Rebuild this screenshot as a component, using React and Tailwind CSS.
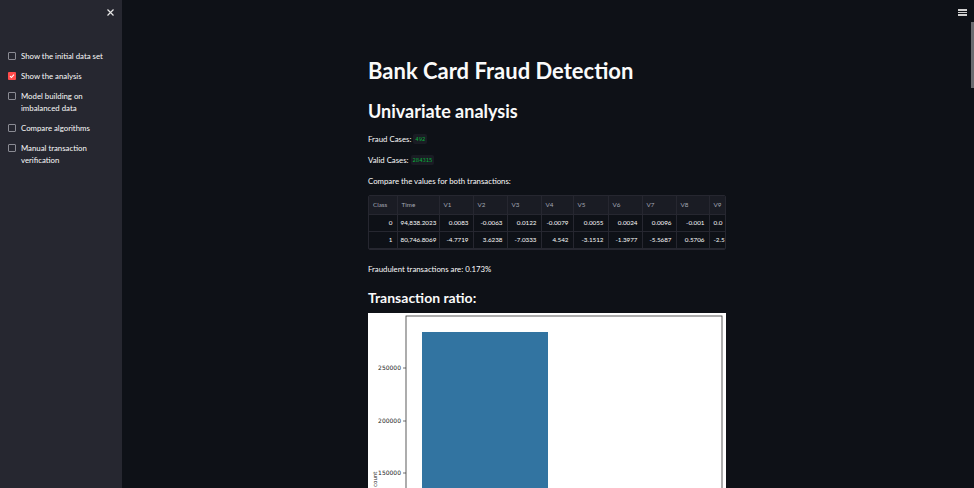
import React from "react";

const font = { fontFamily: 'Lato, "Noto Sans", "Liberation Sans", sans-serif' };

function Check({ checked }) {
  return checked ? (
    <div className="w-[8px] h-[8px] mt-[2px] shrink-0 rounded-[1px] bg-[#ff4b4b] flex items-center justify-center">
      <svg width="6" height="6" viewBox="0 0 6 6"><path d="M1 3.2 L2.4 4.5 L5 1.6" stroke="white" strokeWidth="1.1" fill="none" /></svg>
    </div>
  ) : (
    <div className="w-[8px] h-[8px] mt-[2px] shrink-0 rounded-[1px] border border-[#8a8b93]" />
  );
}

const items = [
  { label: ["Show the initial data set"], c: false },
  { label: ["Show the analysis"], c: true },
  { label: ["Model building on", "imbalanced data"], c: false },
  { label: ["Compare algorithms"], c: false },
  { label: ["Manual transaction", "verification"], c: false },
];

const cols = [
  ["Class", 28], ["Time", 42], ["V1", 34], ["V2", 34], ["V3", 34], ["V4", 32], ["V5", 35], ["V6", 34], ["V7", 34], ["V8", 33], ["V9", 30],
];
const rows = [
  ["0", "94,838.2023", "0.0083", "-0.0063", "0.0122", "-0.0079", "0.0055", "0.0024", "0.0096", "-0.001", "0.0"],
  ["1", "80,746.8069", "-4.7719", "3.6238", "-7.0333", "4.542", "-3.1512", "-1.3977", "-5.5687", "0.5706", "-2.5"],
];

export default function App() {
  return (
    <div className="w-[974px] h-[488px] overflow-hidden flex bg-[#0e1117] text-[#fafafa] relative" style={font}>
      <div className="w-[122px] shrink-0 h-full bg-[#262730] relative">
        <svg className="absolute left-[107px] top-[9px]" width="7" height="7" viewBox="0 0 7 7"><path d="M0.5 0.5 L6.5 6.5 M6.5 0.5 L0.5 6.5" stroke="#e6e6e6" strokeWidth="1.2" /></svg>
        <div className="pt-[50px] pl-[8px] flex flex-col gap-[8px]">
          {items.map((it, i) => (
            <div key={i} className="flex gap-[5px] items-start">
              <Check checked={it.c} />
              <div className="text-[7.8px] leading-[12px] text-[#fafafa]">
                {it.label.map((l, j) => <div key={j}>{l}</div>)}
              </div>
            </div>
          ))}
        </div>
      </div>
      <div className="flex-1 h-full relative">
        <div className="absolute right-[7px] top-[9px] flex flex-col gap-[1px]">
          <div className="w-[9px] h-[1.5px] bg-[#d0d0d0]" />
          <div className="w-[9px] h-[1.5px] bg-[#d0d0d0]" />
          <div className="w-[9px] h-[1.5px] bg-[#d0d0d0]" />
        </div>
        <div className="absolute right-0 top-[22px] w-[3px] h-[66px] bg-[#6a6b70]" />
        <div className="ml-[246px] w-[358px] pt-[57px]">
          <h1 className="text-[22px] font-bold leading-[28px] text-[#fafafa] whitespace-nowrap">Bank Card Fraud Detection</h1>
          <h2 className="mt-[14px] text-[18px] font-bold leading-[24px] whitespace-nowrap">Univariate analysis</h2>
          <div className="mt-[10px] text-[7.8px] leading-[12px] flex items-center gap-[2px]">
            <span>Fraud Cases:</span>
            <span className="bg-[#1a1c24] text-[#09ab3b] px-[2px] rounded-[2px] text-[5.5px] leading-[10px]" style={{ fontFamily: '"DejaVu Sans Mono", monospace' }}>492</span>
          </div>
          <div className="mt-[9px] text-[7.8px] leading-[12px] flex items-center gap-[2px]">
            <span>Valid Cases:</span>
            <span className="bg-[#1a1c24] text-[#09ab3b] px-[2px] rounded-[2px] text-[5.5px] leading-[10px]" style={{ fontFamily: '"DejaVu Sans Mono", monospace' }}>284315</span>
          </div>
          <div className="mt-[9px] text-[7.8px] leading-[12px]">Compare the values for both transactions:</div>
          <div className="mt-[8px] w-[358px] overflow-hidden border border-[#262730] rounded-[2px]">
            <table className="border-collapse text-[6.3px] table-fixed" style={{ width: 370 }}>
              <colgroup>
                {cols.map(([c, w]) => <col key={c} style={{ width: w }} />)}
              </colgroup>
              <thead>
                <tr className="h-[18px] bg-[#1a1c24]">
                  {cols.map(([c]) => (
                    <th key={c} className="font-normal text-left pl-[4px] text-[#a3a8b4] border-r border-b border-[#262730]">{c}</th>
                  ))}
                </tr>
              </thead>
              <tbody>
                {rows.map((r, i) => (
                  <tr key={i} className="h-[17px]">
                    {r.map((v, j) => (
                      <td key={j} className={`${j === 1 ? "text-left pl-[3px]" : j === 10 ? "text-left pl-[4px]" : "text-right pr-[4px]"} text-[#fafafa] border-r border-b border-[#262730] whitespace-nowrap overflow-hidden`}>{v}</td>
                    ))}
                  </tr>
                ))}
              </tbody>
            </table>
          </div>
          <div className="mt-[13px] text-[7.8px] leading-[12px]">Fraudulent transactions are: 0.173%</div>
          <h3 className="mt-[13px] text-[14px] font-bold leading-[20px] whitespace-nowrap">Transaction ratio:</h3>
          <div className="mt-[5px] w-[358px] h-[200px] bg-white relative">
            <svg width="358" height="200" viewBox="0 0 358 200">
              <rect x="38" y="3" width="316" height="200" fill="none" stroke="#333" strokeWidth="0.8" />
              <rect x="54" y="19" width="126" height="190" fill="#3274a1" />
              {[[55, "250000"], [108, "200000"], [160, "150000"]].map(([y, t]) => (
                <g key={t}>
                  <line x1="35" y1={y} x2="38" y2={y} stroke="#333" strokeWidth="0.7" />
                  <text x="33" y={y + 2.2} fontSize="6" textAnchor="end" fill="#222" fontFamily="DejaVu Sans, sans-serif">{t}</text>
                </g>
              ))}
              <text x="0" y="0" fontSize="5.5" fill="#222" fontFamily="DejaVu Sans, sans-serif" transform="translate(9 174) rotate(-90)">count</text>
            </svg>
          </div>
        </div>
      </div>
    </div>
  );
}
